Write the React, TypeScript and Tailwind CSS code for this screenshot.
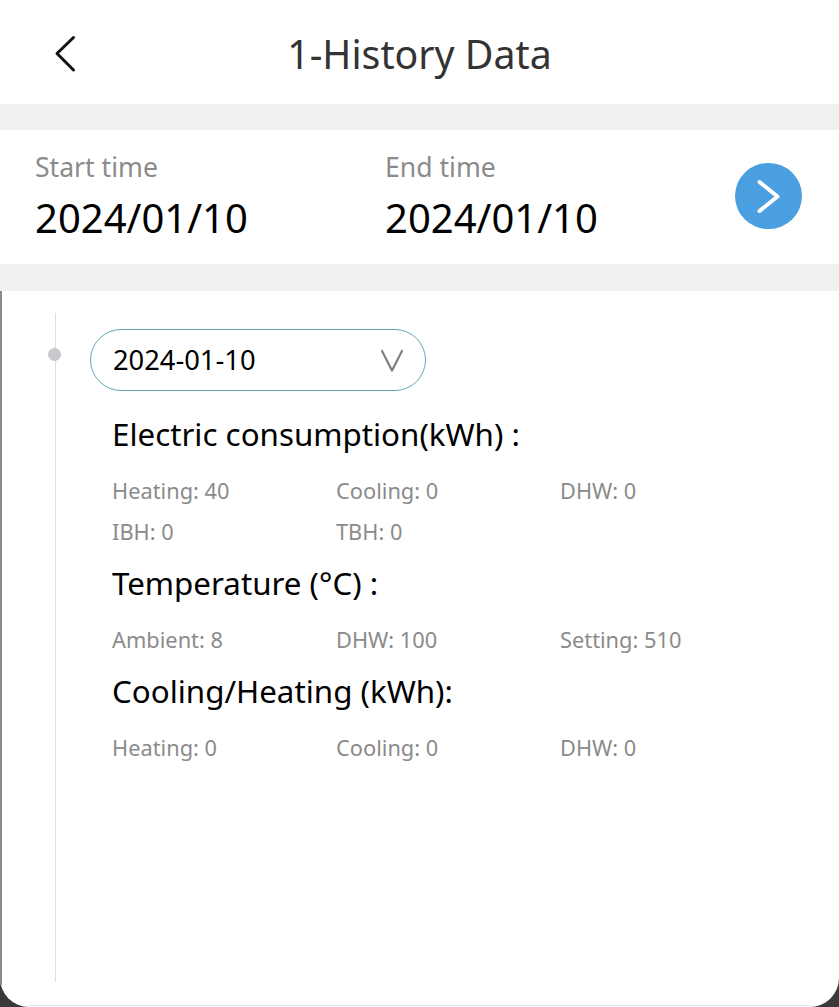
import React from "react";

const Section = ({ title, rows }: { title: string; rows: string[][] }) => (
  <div className="flex flex-col">
    <div className="h-[32px] flex items-center text-[31.3px] leading-[32px] text-black">{title}</div>
    <div className="mt-[29px] flex flex-col gap-[17px]">
      {rows.map((r, i) => (
        <div key={i} className="grid grid-cols-[224px_224px_224px] h-[24px] items-center text-[21.8px] leading-[24px] text-[#8b8b8b]">
          {r.map((t) => (
            <span key={t}>{t}</span>
          ))}
        </div>
      ))}
    </div>
  </div>
);

const DateCol = ({ label, value, w }: { label: string; value: string; w: string }) => (
  <div className={`flex flex-col ${w}`}>
    <span className="text-[26.6px] leading-[32px] -mt-[1px] text-[#8b8b8b]">{label}</span>
    <span className="mt-[11px] text-[40px] leading-[48px] text-black">{value}</span>
  </div>
);

export default function App() {
  return (
    <div className="w-[839px] h-[1007px] overflow-hidden flex flex-col bg-[#3a3a3c] font-['Noto_Sans',sans-serif]">
      <header className="h-[104px] bg-white flex items-center justify-center relative shrink-0 pt-[3px]">
        <svg className="absolute left-[52px] top-[35px]" width="26" height="38" viewBox="0 0 26 38" fill="none">
          <path d="M21.5 2.5 L5 18.5 L21.5 35" stroke="#111" strokeWidth="3" strokeLinecap="round" strokeLinejoin="round" />
        </svg>
        <h1 className="text-[39.3px] leading-[48px] text-[#333] font-normal">1-History Data</h1>
      </header>
      <div className="h-[26px] bg-[#f1f1f1] shrink-0" />
      <section className="h-[134px] bg-white flex items-center pl-[35px] shrink-0">
        <DateCol label="Start time" value="2024/01/10" w="w-[350px]" />
        <DateCol label="End time" value="2024/01/10" w="w-[350px]" />
        <div className="w-[67px] h-[66px] mb-[2px] rounded-full bg-[#499fdf]">
          <svg width="67" height="66" viewBox="0 0 67 66" fill="none">
            <path d="M24.5 19 L42.5 33.5 L24.5 48" stroke="#fff" strokeWidth="4" strokeLinecap="round" strokeLinejoin="round" />
          </svg>
        </div>
      </section>
      <div className="h-[27px] bg-[#f1f1f1] shrink-0" />
      <main className="relative flex-1 bg-white rounded-b-[29px] pl-[55px] pt-[22px]">
        <span className="absolute left-0 top-0 w-[2px] h-[694px] bg-[#8a8a8a]" />
        <span className="absolute left-[28px] right-[28px] bottom-[1px] h-px bg-[#e5e5e5]" />
        <div className="relative h-[669px] border-l border-[#dedede] pl-[34px] pt-[16px]">
          <span className="absolute left-[-8px] top-[35px] w-[13px] h-[13px] rounded-full bg-[#c8c8ce]" />
          <div className="w-[336px] h-[62px] rounded-full border border-[#66a6b8] flex items-center justify-between pl-[22px] pr-[21px] text-[27.3px] text-black">
            <span className="pt-[1px]">2024-01-10</span>
            <svg className="mt-[2px]" width="24" height="24" viewBox="0 0 24 24" fill="none">
              <path d="M2 2 L12 21.5 L22 2" stroke="#808080" strokeWidth="2.2" strokeLinecap="round" strokeLinejoin="round" />
            </svg>
          </div>
          <div className="ml-[22px] mt-[27px] flex flex-col gap-[23px]">
            <Section title="Electric consumption(kWh) :" rows={[["Heating: 40", "Cooling: 0", "DHW: 0"], ["IBH: 0", "TBH: 0"]]} />
            <Section title="Temperature (°C) :" rows={[["Ambient: 8", "DHW: 100", "Setting: 510"]]} />
            <Section title="Cooling/Heating (kWh):" rows={[["Heating: 0", "Cooling: 0", "DHW: 0"]]} />
          </div>
        </div>
      </main>
    </div>
  );
}
